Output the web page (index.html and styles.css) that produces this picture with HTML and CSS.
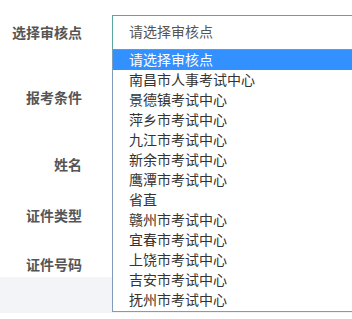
FILE: index.html
```html
<!DOCTYPE html>
<html lang="zh-CN">
<head>
<meta charset="UTF-8">
<title>报名信息</title>
<link rel="stylesheet" href="styles.css">
</head>
<body>
  <div class="form">
    <div class="row first">
      <label class="label">选择审核点</label>
      <div class="field">
        <div class="select">请选择审核点</div>
        <!-- opened options list -->
        <ul class="options">
          <li class="active">请选择审核点</li>
          <li>南昌市人事考试中心</li>
          <li>景德镇考试中心</li>
          <li>萍乡市考试中心</li>
          <li>九江市考试中心</li>
          <li>新余市考试中心</li>
          <li>鹰潭市考试中心</li>
          <li>省直</li>
          <li>赣州市考试中心</li>
          <li>宜春市考试中心</li>
          <li>上饶市考试中心</li>
          <li>吉安市考试中心</li>
          <li>抚州市考试中心</li>
        </ul>
      </div>
    </div>
    <div class="row" id="row-cond">
      <label class="label">报考条件</label>
    </div>
    <div class="row" id="row-name">
      <label class="label">姓名</label>
    </div>
    <div class="row" id="row-idtype">
      <label class="label">证件类型</label>
    </div>
    <div class="row" id="row-idno">
      <label class="label">证件号码</label>
    </div>
    <div class="band"></div>
  </div>
</body>
</html>
```

FILE: styles.css
```css
body {
  margin: 0;
  background: #fff;
  font-family: "Liberation Sans", "Noto Sans CJK SC", sans-serif;
  font-size: 14px;
  overflow: hidden;
}
.form {
  padding-top: 15px;
}
.row {
  display: flex;
  align-items: center;
  height: 20px;
}
.row.first {
  height: 35px;
}
.label {
  width: 82px;
  flex-shrink: 0;
  text-align: right;
  color: #555;
  font-weight: bold;
  line-height: 20px;
}
.field {
  position: relative;
  flex: 1;
  margin-left: 30px;
}
.select {
  box-sizing: border-box;
  height: 35px;
  line-height: 33px;
  padding-left: 16px;
  border: 1px solid #5aa7a0;
  border-right: none; /* box continues past the window edge */
  color: #555;
}
.options {
  position: absolute;
  z-index: 2;
  top: 35px;
  left: 0;
  right: 0;
  margin: 0;
  padding: 0 0 1px;
  list-style: none;
  background: #fff;
  border: 1px solid #7f9db9;
  border-top: none;
  border-right: none;
}
.options li {
  height: 20px;
  line-height: 20px;
  padding-left: 16px;
  color: #333;
}
.options li.active {
  background: #3390ff;
  color: #fff;
}
#row-cond {
  margin-top: 38px;
}
#row-name {
  margin-top: 47px;
}
#row-idtype {
  margin-top: 31px;
}
#row-idno {
  margin-top: 29px;
}
.band {
  margin-top: 2px;
  height: 36px;
  background: #f3f4f8;
}
```
